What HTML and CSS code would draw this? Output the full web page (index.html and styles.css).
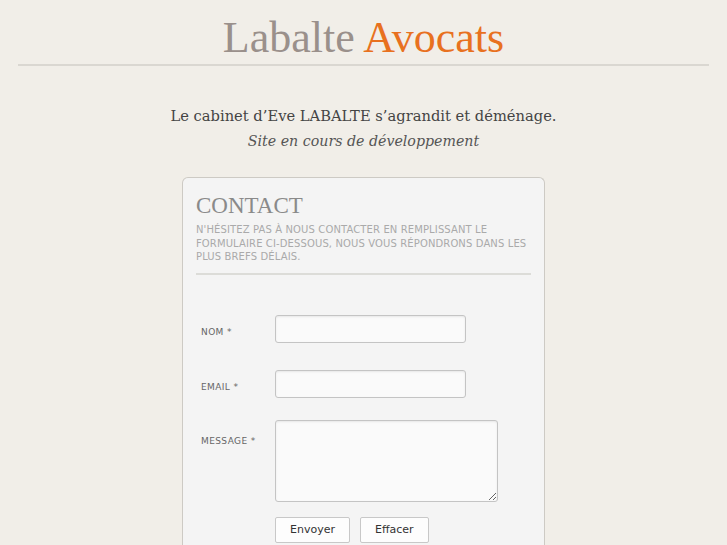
FILE: index.html
```html
<!DOCTYPE html>
<html lang="fr">
<head>
  <meta charset="UTF-8" />
  <title>Labalte Avocats</title>
  <link rel="stylesheet" href="styles.css">
</head>
<body>

  <!-- Header -->
  <header class="site-header">
    <h1 class="logo">Labalte <span class="logo-accent">Avocats</span></h1>
  </header>

  <div class="intro">
    <p class="intro-main">Le cabinet d’Eve LABALTE s’agrandit et déménage.</p>
    <p class="intro-sub">Site en cours de développement</p>
  </div>

  <!-- Contact -->
  <div class="contact-box">
    <h2>Contact</h2>
    <p class="contact-desc">N'hésitez pas à nous contacter en remplissant le formulaire ci-dessous, nous vous répondrons dans les plus brefs délais.</p>

    <form class="contact-form">
      <div class="form-row row-nom">
        <label for="nom">Nom *</label>
        <input type="text" id="nom" name="nom" />
      </div>
      <div class="form-row row-email">
        <label for="email">Email *</label>
        <input type="text" id="email" name="email" />
      </div>
      <div class="form-row row-message">
        <label for="message">Message *</label>
        <textarea id="message" name="message"></textarea>
      </div>
      <div class="form-actions">
        <button type="submit">Envoyer</button>
        <button type="reset">Effacer</button>
      </div>
    </form>
  </div>

</body>
</html>
```

FILE: styles.css
```css
body {
  font-family: 'DejaVu Sans', sans-serif;
  background: #f1eee8;
  color: #333;
  margin: 0;
  padding: 0;
}

.site-header {
  margin: 0 18px;
  border-bottom: 2px solid #dad7d1;
  text-align: center;
}

.logo {
  font-family: 'Liberation Serif', serif;
  font-weight: normal;
  font-size: 44px;
  line-height: 48px;
  color: #9a908b;
  margin: 0;
  padding: 14px 0 2px;
}

.logo-accent {
  color: #e8711f;
}

.intro {
  text-align: center;
  font-family: 'DejaVu Serif', serif;
  margin: 40px 0 26px;
}

.intro-main {
  font-size: 14.7px;
  color: #444;
  margin: 0 0 5px;
  line-height: 20px;
}

.intro-sub {
  font-size: 14.2px;
  font-style: italic;
  color: #555;
  margin: 0;
  line-height: 20px;
}

.contact-box {
  width: 335px;
  margin: 0 auto;
  background: #f4f4f4;
  border: 1px solid #cdcac4;
  border-bottom: none;
  border-radius: 6px 6px 0 0;
  padding: 14px 13px 10px;
}

.contact-box h2 {
  font-family: 'Liberation Serif', serif;
  font-weight: normal;
  font-size: 23px;
  color: #8a8a8a;
  text-transform: uppercase;
  margin: 0 0 3px;
  line-height: 28px;
}

.contact-desc {
  font-size: 10px;
  line-height: 13.5px;
  color: #aaa;
  text-transform: uppercase;
  letter-spacing: 0.12px;
  margin: 0;
  padding-bottom: 9px;
  border-bottom: 2px solid #dcdcd8;
}

.contact-form {
  padding: 40px 5px 0;
}

.form-row {
  display: flex;
  align-items: flex-start;
}

.row-nom {
  margin-bottom: 27px;
}

.row-email {
  margin-bottom: 22px;
}

.row-message {
  margin-bottom: 15px;
}

.form-row label {
  width: 74px;
  font-size: 9px;
  color: #666;
  text-transform: uppercase;
  letter-spacing: 0.4px;
  padding-top: 12px;
}

.row-message label {
  padding-top: 16px;
}

.form-row input,
.form-row textarea {
  box-sizing: border-box;
  width: 191px;
  height: 28px;
  background: #fafafa;
  border: 1px solid #c4c4c4;
  border-radius: 3px;
  box-shadow: inset 0 1px 2px rgba(0, 0, 0, 0.08);
  margin: 0;
  font-family: 'DejaVu Sans', sans-serif;
}

.form-row textarea {
  display: block;
  width: 223px;
  height: 82px;
  padding: 0;
}

.form-actions {
  display: flex;
  gap: 10px;
  margin-left: 74px;
}

.form-actions button {
  font-family: 'DejaVu Sans', sans-serif;
  font-size: 11px;
  color: #333;
  background: #fdfdfd;
  border: 1px solid #c8c8c8;
  border-radius: 2px;
  height: 26px;
  padding: 0 14px;
  cursor: pointer;
}
```
